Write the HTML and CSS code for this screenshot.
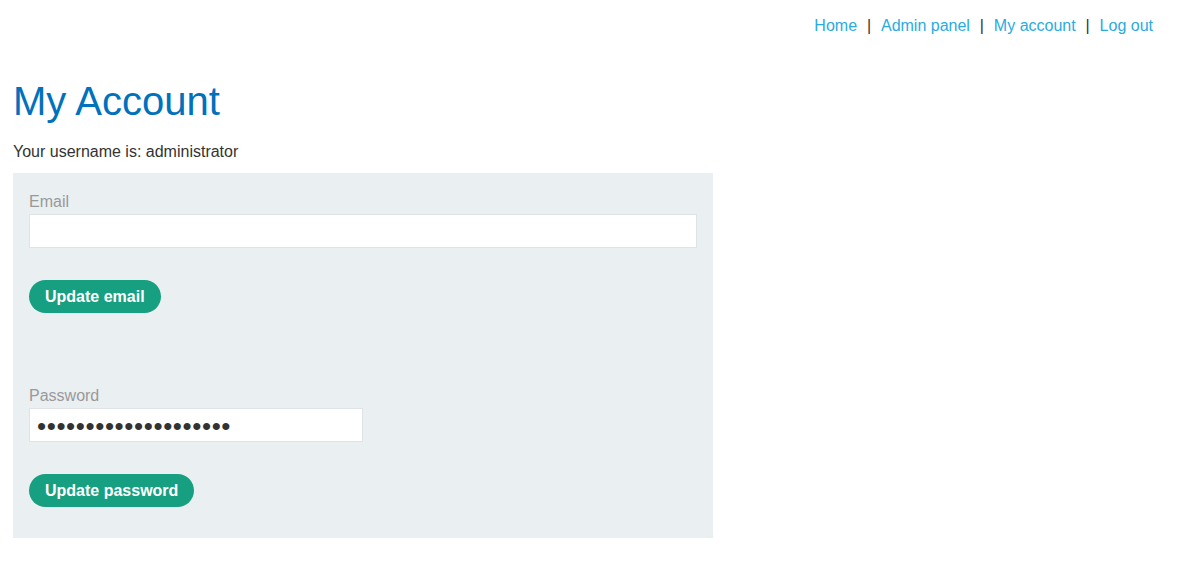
FILE: index.html
```html
<!DOCTYPE html>
<html>
<head>
<meta charset="utf-8">
<title>My Account</title>
<link rel="stylesheet" href="styles.css">
</head>
<body>
<header class="top-nav">
  <a href="#">Home</a><span class="sep">|</span>
  <a href="#">Admin panel</a><span class="sep">|</span>
  <a href="#">My account</a><span class="sep">|</span>
  <a href="#">Log out</a>
</header>
<main class="content">
  <h1 class="title">My Account</h1>
  <p class="username">Your username is: administrator</p>
  <section class="panel">
    <form class="form-block">
      <label class="field-label">Email</label>
      <input class="field-input" type="email">
      <button class="btn" type="button">Update email</button>
    </form>
    <form class="form-block form-block--spaced">
      <label class="field-label">Password</label>
      <input class="field-input field-input--short field-input--secret" type="password" value="administrator1234567">
      <button class="btn" type="button">Update password</button>
    </form>
  </section>
</main>
</body>
</html>
```
FILE: styles.css
```css
* { box-sizing: border-box; }
html, body {
  margin: 0;
  padding: 0;
  background: #fff;
  font-family: "Liberation Sans", Arial, sans-serif;
  font-size: 16px;
  color: #333332;
}
.top-nav {
  display: flex;
  justify-content: flex-end;
  align-items: center;
  gap: 9.9px;
  padding: 17px 34px 0 0;
  line-height: 18px;
  height: 35px;
}
.top-nav a {
  color: #29abe2;
  text-decoration: none;
}
.top-nav .sep {
  color: #333;
}
.content {
  padding: 0 13px;
}
.title {
  margin: 43px 0 0 0;
  font-size: 40px;
  line-height: 46px;
  font-weight: normal;
  color: #0071bc;
}
.username {
  margin: 19px 0 0 0;
  line-height: 18px;
}
.panel {
  margin-top: 12px;
  width: 700px;
  background: #eaeff2;
  padding: 20px 16px 31px 16px;
}
.form-block {
  display: flex;
  flex-direction: column;
  align-items: flex-start;
  margin: 0;
}
.form-block--spaced {
  margin-top: 74px;
}
.field-label {
  display: block;
  line-height: 18px;
  color: #999;
  margin-bottom: 3px;
}
.field-input {
  width: 100%;
  height: 34px;
  border: 1px solid #dfe3e6;
  background: #fff;
  padding: 0 7px;
  font-family: "Liberation Sans", Arial, sans-serif;
  font-size: 16px;
  color: #333;
  outline: none;
}
.field-input--short {
  width: 334px;
}
.field-input--secret {
  font-size: 26px;
  letter-spacing: 0.6px;
  padding: 3px 6px 0 7px;
}
.btn {
  margin-top: 32px;
  height: 33px;
  padding: 0 16px;
  border: none;
  border-radius: 17px;
  background: #169f80;
  color: #fff;
  font-family: "Liberation Sans", Arial, sans-serif;
  font-weight: bold;
  font-size: 16px;
  line-height: 33px;
  cursor: pointer;
}
```
